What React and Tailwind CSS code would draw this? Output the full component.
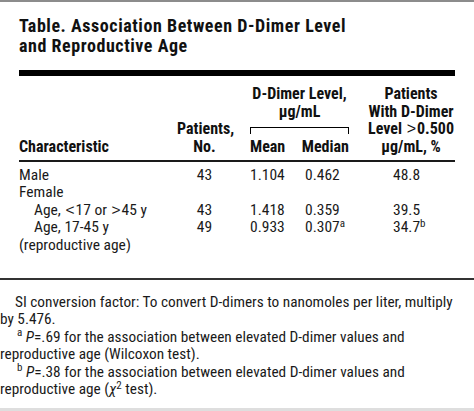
function Sym({ children }) {
  return <span className="font-['Liberation_Sans',sans-serif] font-normal leading-none mx-[1px]">{children}</span>;
}

export default function App() {
  return (
    <div className="w-[474px] h-[411px] flex flex-col bg-white text-[#111] font-['Roboto_Condensed','Liberation_Sans',sans-serif] overflow-hidden">
      <div className="h-[2px] bg-[#8c8c8c]" />
      <div className="px-[19px] pt-[13.5px] text-[18px] leading-[20px] font-bold tracking-[0.55px] whitespace-nowrap">
        <div>Table. Association Between D-Dimer Level</div>
        <div>and Reproductive Age</div>
      </div>
      <div className="mx-[19px] mt-[14px] h-[6px] bg-black" />
      <div className="mx-[19px] pt-[9.5px] pb-[5px] grid grid-cols-[158px_55px_18px_99px_18px_88px] items-end text-[16px] leading-[17.5px] font-bold whitespace-nowrap">
        <div>Characteristic</div>
        <div className="text-center">
          Patients,
          <br />
          No.
        </div>
        <div />
        <div className="flex flex-col">
          <div className="text-center">D-Dimer Level,</div>
          <div className="text-center">µg/mL</div>
          <div className="h-[17.5px] pt-[7px]">
            <div className="h-[7px] border-t border-x border-black" />
          </div>
          <div className="flex justify-between">
            <span>Mean</span>
            <span>Median</span>
          </div>
        </div>
        <div />
        <div className="text-center">
          Patients
          <br />
          With D-Dimer
          <br />
          Level <Sym>&gt;</Sym>0.500
          <br />
          µg/mL, %
        </div>
      </div>
      <div className="mx-[19px] h-[1.5px] bg-[#1a1a1a]" />
      <div className="mx-[19px] pt-[5px] pb-[24px] grid grid-cols-[158px_55px_18px_55px_62px_88px] text-[15.5px] leading-[17.5px] whitespace-nowrap text-[#1a1a1a]">
        <div>Male</div>
        <div className="text-center">43</div>
        <div />
        <div>1.104</div>
        <div>0.462</div>
        <div className="pl-[26px]">48.8</div>

        <div className="col-span-6">Female</div>

        <div className="pl-[15px]">
          Age, <Sym>&lt;</Sym>17 or <Sym>&gt;</Sym>45 y
        </div>
        <div className="text-center">43</div>
        <div />
        <div>1.418</div>
        <div>0.359</div>
        <div className="pl-[26px]">39.5</div>

        <div className="pl-[15px]">Age, 17-45 y</div>
        <div className="text-center">49</div>
        <div />
        <div>0.933</div>
        <div>
          0.307<sup className="text-[11px]">a</sup>
        </div>
        <div className="pl-[26px]">
          34.7<sup className="text-[11px]">b</sup>
        </div>

        <div className="col-span-6">(reproductive age)</div>
      </div>
      <div className="h-[2px] bg-[#333]" />
      <div className="pt-[14px] text-[15.3px] leading-[17.4px] whitespace-nowrap text-[#1a1a1a]">
        <div className="pl-[15px]">SI conversion factor: To convert D-dimers to nanomoles per liter, multiply</div>
        <div>by 5.476.</div>
        <div className="pl-[17px]">
          <sup className="text-[11px]">a</sup> <i>P</i>=.69 for the association between elevated D-dimer values and
        </div>
        <div>reproductive age (Wilcoxon test).</div>
        <div className="pl-[17px]">
          <sup className="text-[11px]">b</sup> <i>P</i>=.38 for the association between elevated D-dimer values and
        </div>
        <div>
          reproductive age (<i>χ</i>
          <sup className="text-[11px]">2</sup> test).
        </div>
      </div>
      <div className="mt-auto h-[3px] bg-[#dedede]" />
    </div>
  );
}
